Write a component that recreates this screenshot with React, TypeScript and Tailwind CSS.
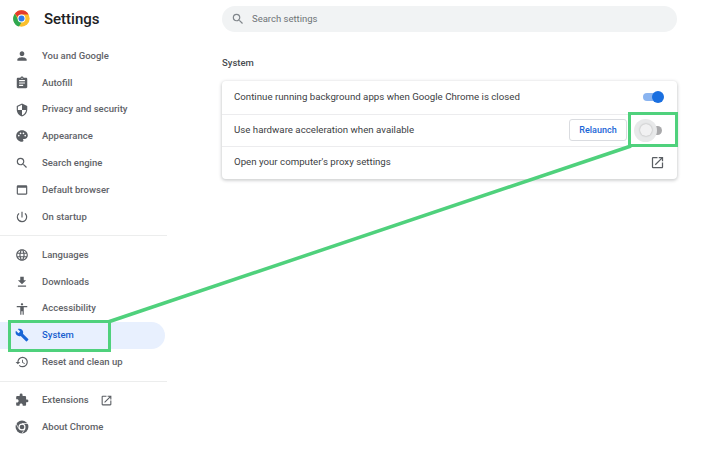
import type { IconType } from "react-icons";
import {
  MdPerson,
  MdAssignment,
  MdSecurity,
  MdPalette,
  MdSearch,
  MdWebAsset,
  MdPowerSettingsNew,
  MdLanguage,
  MdFileDownload,
  MdAccessibility,
  MdBuild,
  MdRestore,
  MdExtension,
  MdOpenInNew,
} from "react-icons/md";

const ChromeLogo = ({ className }: { className: string }) => (
  <svg viewBox="0 0 48 48" className={className}>
    <circle cx="24" cy="24" r="23" fill="#FBC02D" />
    <path d="M24 1a23 23 0 0 1 19.9 11.5H24a11.5 11.5 0 0 0-10.6 7L5.2 10.6A23 23 0 0 1 24 1z" fill="#E33B2E" />
    <path d="M5.2 10.6l9.9 17.2A11.5 11.5 0 0 0 24 35.5L16.9 46.9A23 23 0 0 1 5.2 10.6z" fill="#2FA84F" />
    <circle cx="24" cy="24" r="11" fill="#fff" />
    <circle cx="24" cy="24" r="8.5" fill="#2F7BEA" />
  </svg>
);

const ChromeMono = ({ className }: { className: string }) => (
  <svg viewBox="0 0 48 48" className={className}>
    <circle cx="24" cy="24" r="22" fill="#5a5e63" />
    <circle cx="24" cy="24" r="12" fill="#fff" />
    <circle cx="24" cy="24" r="8" fill="#5a5e63" />
    <path d="M24 12h20M13.6 30L3.6 12.7M34.4 30L24 46" stroke="#fff" strokeWidth="2.5" fill="none" />
  </svg>
);

const NavItem = ({
  icon: Icon,
  label,
  active,
  external,
}: {
  icon: IconType;
  label: string;
  active?: boolean;
  external?: boolean;
}) => (
  <div
    className={`flex h-[26.85px] w-[165px] items-center rounded-r-full pl-[15px] text-[9.5px] font-medium ${
      active ? "bg-[#e8f0fe] text-[#1a5fcf]" : "text-[#5f6368]"
    }`}
  >
    <Icon className={`h-[14px] w-[14px] ${active ? "text-[#1a66d6]" : "text-[#5a5e63]"}`} />
    <span className="ml-[13px]">{label}</span>
    {external && <MdOpenInNew className="ml-[11px] h-[13px] w-[13px] text-[#5a5e63]" />}
  </div>
);

const Row = ({ children, border }: { children: React.ReactNode; border?: boolean }) => (
  <div
    className={`flex h-[32.5px] items-center pl-[12px] pr-[12px] text-[9.7px] text-[#3c4043] ${
      border ? "border-t border-[#ececee]" : ""
    }`}
  >
    {children}
  </div>
);

const GreenBox = ({ className }: { className: string }) => (
  <div className={`absolute border-[3px] border-[#4fd17c] ${className}`} />
);

export default function App() {
  return (
    <div
      className="relative flex h-[458px] w-[725px] overflow-hidden bg-white"
      style={{ fontFamily: "Roboto, sans-serif" }}
    >
      <aside className="w-[167px] shrink-0">
        <div className="flex h-[42.5px] items-start pt-[10px] pl-[13px]">
          <ChromeLogo className="h-[17px] w-[17px]" />
          <h1 className="ml-[14px] text-[15px] leading-[18px] font-medium text-[#202124]">Settings</h1>
        </div>
        <NavItem icon={MdPerson} label="You and Google" />
        <NavItem icon={MdAssignment} label="Autofill" />
        <NavItem icon={MdSecurity} label="Privacy and security" />
        <NavItem icon={MdPalette} label="Appearance" />
        <NavItem icon={MdSearch} label="Search engine" />
        <NavItem icon={MdWebAsset} label="Default browser" />
        <NavItem icon={MdPowerSettingsNew} label="On startup" />
        <div className="mt-[5px] mb-[5px] h-px bg-[#eceded]" />
        <NavItem icon={MdLanguage} label="Languages" />
        <NavItem icon={MdFileDownload} label="Downloads" />
        <NavItem icon={MdAccessibility} label="Accessibility" />
        <NavItem icon={MdBuild} label="System" active />
        <NavItem icon={MdRestore} label="Reset and clean up" />
        <div className="mt-[5px] mb-[5px] h-px bg-[#eceded]" />
        <NavItem icon={MdExtension} label="Extensions" external />
        <div className="flex h-[26.85px] items-center pl-[15px] text-[9.5px] font-medium text-[#5f6368]">
          <ChromeMono className="h-[14px] w-[14px]" />
          <span className="ml-[13px]">About Chrome</span>
        </div>
      </aside>

      <main className="ml-[55px] w-[455px]">
        <div className="mt-[6px] flex h-[26px] items-center rounded-full bg-[#f1f3f4] pl-[9px] text-[9.5px] text-[#6f7377]">
          <MdSearch className="h-[14px] w-[14px] text-[#80868b]" />
          <span className="ml-[7px]">Search settings</span>
        </div>
        <h2 className="mt-[25px] text-[9.5px] leading-[12px] font-medium text-[#4a4d51]">System</h2>
        <div className="mt-[12px] rounded-[4px] bg-white shadow-[0_1px_3px_1px_rgba(60,64,67,0.22)]">
          <Row>
            <span>Continue running background apps when Google Chrome is closed</span>
            <div className="relative ml-auto mr-[2px] h-[8px] w-[20px] rounded-full bg-[#8ab4f0]">
              <div className="absolute top-[-2px] right-[-1px] h-[12px] w-[12px] rounded-full bg-[#1a6fe0]" />
            </div>
          </Row>
          <Row border>
            <span>Use hardware acceleration when available</span>
            <div className="ml-auto mr-[15px] flex h-[22px] w-[58px] items-center justify-center rounded-[3px] border border-[#dadce0] text-[9px] font-medium text-[#1a66d6]">
              Relaunch
            </div>
            <div className="relative mr-[3px] h-[9px] w-[20px] rounded-full bg-[#a9a9ab]">
              <div className="absolute top-[-7px] left-[-8px] h-[23px] w-[23px] rounded-full bg-[#e8e9ea]" />
              <div className="absolute top-[-2px] left-[-2px] h-[12px] w-[12px] rounded-full bg-[#f1f1f2] shadow-[0_0_2px_rgba(0,0,0,0.3)]" />
            </div>
          </Row>
          <Row border>
            <span>Open your computer's proxy settings</span>
            <MdOpenInNew className="ml-auto h-[15px] w-[15px] text-[#5a5e63]" />
          </Row>
        </div>
      </main>

      {/* annotation drawn over the page */}
      <svg className="pointer-events-none absolute inset-0" width="725" height="458">
        <line x1="108" y1="322" x2="631" y2="146" stroke="#4fd17c" strokeWidth="3.5" />
      </svg>
      <GreenBox className="top-[320px] left-[8px] h-[32px] w-[103px]" />
      <GreenBox className="top-[112px] left-[628px] h-[35px] w-[50px]" />
    </div>
  );
}
